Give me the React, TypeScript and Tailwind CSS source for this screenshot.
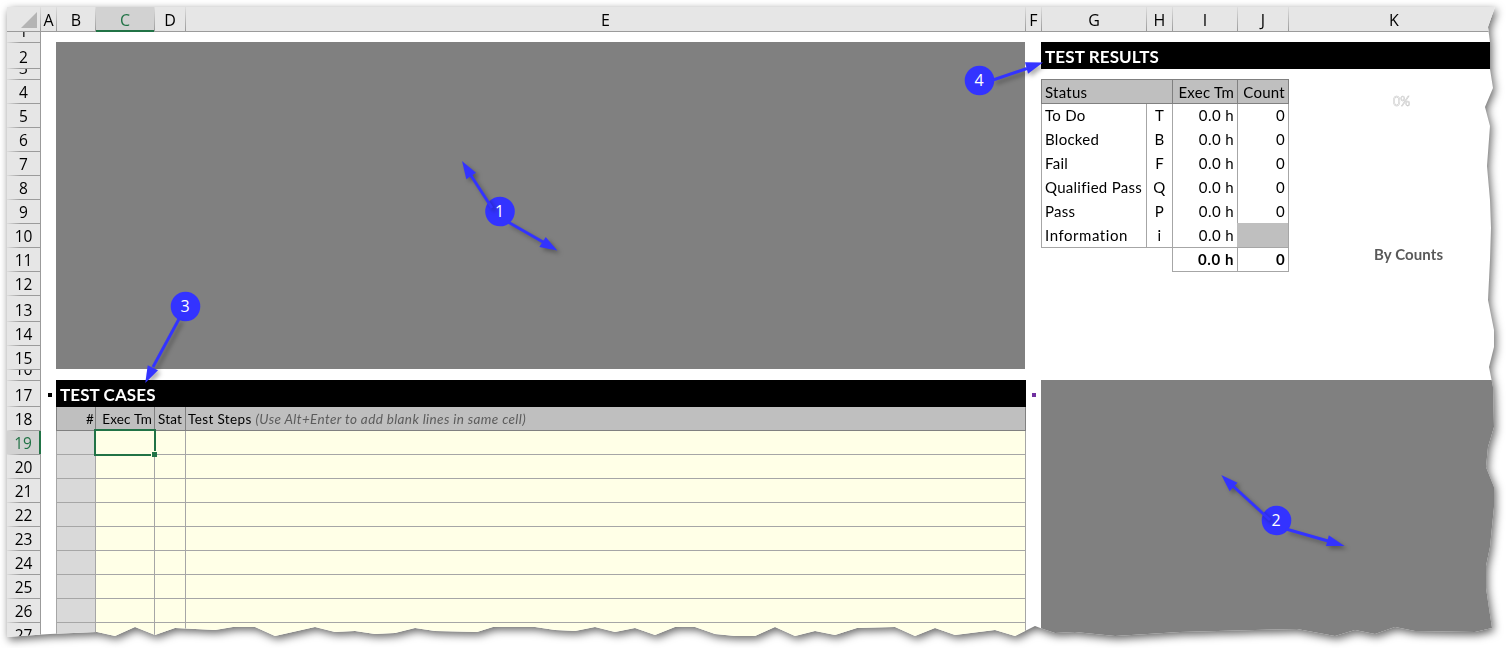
import React from "react";
import { clsx } from "clsx";

const columns: { name: string; width: string; selected?: boolean }[] = [
  { name: "A", width: "w-4" },
  { name: "B", width: "w-[39px]" },
  { name: "C", width: "w-[59px]", selected: true },
  { name: "D", width: "w-[31px]" },
  { name: "E", width: "w-[840px]" },
  { name: "F", width: "w-4" },
  { name: "G", width: "w-[105px]" },
  { name: "H", width: "w-[26px]" },
  { name: "I", width: "w-[65px]" },
  { name: "J", width: "w-[51px]" },
  { name: "K", width: "w-[211px]" },
];

const rowHeights: Record<number, string> = {
  1: "h-[11px]",
  2: "h-[26px]",
  3: "h-[11px]",
  13: "h-[26px]",
  16: "h-[11px]",
  17: "h-[26px]",
};

const statuses = [
  ["To Do", "T", "0"],
  ["Blocked", "B", "0"],
  ["Fail", "F", "0"],
  ["Qualified Pass", "Q", "0"],
  ["Pass", "P", "0"],
  ["Information", "i", ""],
];

function ColumnHeaders() {
  return (
    <div className="flex h-[25px] border-b border-[#9b9b9b] bg-[#e6e6e6]">
      <div className="flex w-[34px] shrink-0">
        <div className="flex flex-1 items-end justify-end pr-[3px] pb-[3px]">
          <svg width="16" height="16" viewBox="0 0 16 16">
            <path d="M16 0V16H0Z" fill="#b4b4b4" />
          </svg>
        </div>
        <div className="w-px bg-linear-to-b from-[#dedede] to-[#9b9b9b]" />
      </div>
      {columns.map((c) => (
        <div key={c.name} className={clsx("flex shrink-0", c.width)}>
          <div
            className={clsx(
              "flex flex-1 items-center justify-center pt-0.5 text-base leading-6",
              c.selected ? "h-[25px] border-b-2 border-[#217346] bg-[#d2d2d2] text-[#217346]" : "h-6 text-black",
            )}
          >
            {c.name}
          </div>
          <div className="h-6 w-px bg-linear-to-b from-[#dedede] to-[#9b9b9b]" />
        </div>
      ))}
    </div>
  );
}

function RowHeaders() {
  return (
    <div className="w-[34px] shrink-0">
      {Array.from({ length: 27 }, (_, i) => i + 1).map((n) => (
        <div
          key={n}
          className={clsx(
            "flex flex-col overflow-hidden",
            rowHeights[n] ?? "h-6",
            n === 19 ? "bg-[#d2d2d2] text-[#217346]" : "bg-[#e6e6e6] text-black",
          )}
        >
          <div
            className={clsx(
              "flex min-h-0 flex-1 items-end justify-center border-r text-[15.5px] leading-[22px]",
              n === 19 ? "border-r-2 border-[#217346]" : "border-[#9b9b9b]",
            )}
          >
            <span>{n}</span>
          </div>
          <div className="h-px shrink-0 bg-linear-to-r from-[#dedede] to-[#9b9b9b] to-40%" />
        </div>
      ))}
    </div>
  );
}

function TestCases() {
  const line = "border-r border-b border-[#a6a6a6]";
  const head = "border-r border-b border-[#808080] bg-[#bfbfbf]";
  return (
    <div className="w-[970px] shrink-0 pt-2.5">
      <div className="h-[327px] w-[969px] bg-[#808080]" />
      <div className="mt-[11px] flex h-[27px] items-center bg-black pt-0.5 pl-1 text-[17px] font-bold tracking-[0.1px] text-white">
        TEST CASES
      </div>
      <div className="flex h-6 text-[13.5px] leading-[25px] tracking-[0.2px] whitespace-nowrap">
        <div className={clsx("w-10 border-l pr-px text-right", head)}>#</div>
        <div className={clsx("w-[59px] pr-0.5 text-right", head)}>Exec Tm</div>
        <div className={clsx("w-[31px] text-center", head)}>Stat</div>
        <div className={clsx("w-[840px] pl-0.5 tracking-[0.37px]", head)}>
          Test Steps <i className="text-[#5c5c5c]">(Use Alt+Enter to add blank lines in same cell)</i>
        </div>
      </div>
      {Array.from({ length: 9 }, (_, i) => (
        <div key={i} className="flex h-6">
          <div className={clsx("w-10 border-l bg-[#d9d9d9]", line)} />
          <div className={clsx("w-[59px] bg-[#ffffe7]", line, i === 0 && "relative z-10")}>
            {i === 0 && (
              <div className="absolute -top-[2px] -left-[2px] h-[27px] w-[62px] border-2 border-[#217346]">
                <div className="absolute -right-[3px] -bottom-[3px] size-1.5 border-t border-l border-[#ffffe7] bg-[#217346]" />
              </div>
            )}
          </div>
          <div className={clsx("w-[31px] bg-[#ffffe7]", line)} />
          <div className={clsx("w-[840px] bg-[#ffffe7]", line)} />
        </div>
      ))}
    </div>
  );
}

function TestResults() {
  return (
    <div className="flex-1 pt-2.5">
      <div className="flex h-[27px] items-center bg-black pt-0.5 pl-1 text-[17px] font-bold tracking-[0.12px] text-white">
        TEST RESULTS
      </div>
      <div className="flex h-[311px] pt-2.5">
        <div className="w-[248px] shrink-0 text-[15px] leading-[22px] tracking-[0.25px] whitespace-nowrap">
          <div className="flex h-[25px] border border-[#808080] bg-[#bfbfbf] leading-[25px]">
            <div className="w-[131px] border-r border-[#808080] pl-[3px]">Status</div>
            <div className="w-[65px] border-r border-[#808080] pr-[3px] text-right">Exec Tm</div>
            <div className="w-[50px] pr-[3px] text-right">Count</div>
          </div>
          <div className="flex h-36">
            <div className="w-[106px] border-x border-b border-[#a6a6a6] pl-[3px]">
              {statuses.map(([name]) => (
                <div key={name} className={clsx("h-6", name === "Information" ? "tracking-[0.55px]" : "tracking-[0.28px]")}>
                  {name}
                </div>
              ))}
            </div>
            <div className="w-[26px] border-r border-b border-[#a6a6a6] text-center">
              {statuses.map(([name, key]) => (
                <div key={name} className="h-6">{key}</div>
              ))}
            </div>
            <div className="w-[65px] border-r border-b border-[#a6a6a6] pr-[3px] text-right tracking-[0.4px]">
              {statuses.map(([name]) => (
                <div key={name} className="h-6">0.0 h</div>
              ))}
            </div>
            <div className="w-[51px] border-r border-b border-[#a6a6a6] text-right">
              {statuses.map(([name, , count]) => (
                <div key={name} className={clsx("h-6 pr-[3px]", !count && "-mt-px -ml-px bg-[#bfbfbf]")}>
                  {count}
                </div>
              ))}
            </div>
          </div>
          <div className="ml-[131px] flex h-6 border-b border-l border-[#a6a6a6] text-right font-bold">
            <div className="w-[65px] border-r border-[#a6a6a6] pr-[3px] tracking-[0.6px]">0.0 h</div>
            <div className="w-[51px] border-r border-[#a6a6a6] pr-[3px]">0</div>
          </div>
        </div>
        <div className="flex w-[206px] flex-col pt-[13px]">
          <div className="pl-[104px] text-[12.5px] leading-5 text-transparent [-webkit-text-stroke:0.5px_#c4c4c4]">0%</div>
          <div className="mt-[132px] pl-[85px] text-[15px] leading-5 font-bold tracking-[0.1px] text-[#595959]">By Counts</div>
        </div>
      </div>
      <div className="h-[268px] bg-[#808080]" />
    </div>
  );
}

const markers = [
  {
    n: 1, x: 500, y: 211.5,
    arrows: [
      { from: [492, 208], to: [470, 174], head: "462,161 476,172.7 466.3,179.3" },
      { from: [508, 222], to: [543, 242], head: "557.3,250.5 545.7,237 539.3,247" },
    ],
  },
  {
    n: 2, x: 1276.5, y: 520.5,
    arrows: [
      { from: [1270, 520], to: [1233, 486], head: "1221.3,475 1237.5,482.7 1229.7,491.3" },
      { from: [1286, 529], to: [1328, 541], head: "1344.5,545.9 1328.8,535.2 1326,546" },
    ],
  },
  {
    n: 3, x: 185.5, y: 306.5,
    arrows: [{ from: [179, 319], to: [153, 367], head: "145.3,383 147.7,365.2 158,370.2" }],
  },
  {
    n: 4, x: 979.5, y: 80.5,
    arrows: [{ from: [993, 80], to: [1027, 68.5], head: "1043,62.5 1025,62.2 1028,73.8" }],
  },
];

function Annotations() {
  return (
    <svg className="pointer-events-none absolute inset-0" width="1506" height="648" viewBox="0 0 1506 648">
      {markers.map((m) => (
        <g key={m.n} fill="#3333ff" stroke="#3333ff">
          <circle cx={m.x} cy={m.y} r="14.8" stroke="none" />
          <g className="drop-shadow-[3px_3px_2px_rgba(0,0,0,0.3)]">
            {m.arrows.map((a) => (
              <g key={a.head}>
                <line x1={a.from[0]} y1={a.from[1]} x2={a.to[0]} y2={a.to[1]} strokeWidth="3" />
                <polygon points={a.head} stroke="none" />
              </g>
            ))}
          </g>
          <text x={m.x - 0.5} y={m.y + 5.5} textAnchor="middle" fill="#fff" stroke="none" fontSize="16" className="font-['Open_Sans',sans-serif]">
            {m.n}
          </text>
        </g>
      ))}
    </svg>
  );
}

export default function App() {
  return (
    <div className="relative h-[648px] w-[1506px] overflow-hidden bg-white text-black">
      <div className="h-full w-full drop-shadow-[2px_3px_4px_rgba(0,0,0,0.6)]">
        <div className="h-full w-full overflow-hidden bg-white pt-[7px] pl-[7px] font-['Open_Sans','Noto_Sans',sans-serif] [clip-path:polygon(7px_7px,1495px_7px,1488px_27px,1490px_42px,1490px_69px,1493px_88px,1485px_107px,1490px_126px,1487px_166px,1490px_200px,1491px_228px,1490px_260px,1488px_300px,1494px_330px,1494px_347px,1489px_367px,1493px_387px,1494px_427px,1488px_447px,1486px_467px,1494px_487px,1494px_507px,1490px_547px,1486px_566px,1486px_588px,1492px_628px,1475px_632px,1415px_631px,1395px_627px,1375px_634px,1355px_630px,1335px_636px,1297px_629px,1180px_632px,1115px_636px,1075px_632px,1055px_633px,1043px_629px,1035px_626px,1015px_636px,995px_630px,955px_635px,935px_628px,915px_636px,895px_627px,857px_628px,835px_635px,815px_631px,795px_636px,775px_627px,755px_636px,735px_636px,715px_634px,695px_627px,675px_627px,655px_635px,635px_628px,615px_632px,595px_627px,575px_631px,555px_630px,535px_627px,493px_627px,477px_632px,435px_631px,415px_628px,395px_633px,375px_634px,355px_631px,335px_632px,315px_627px,275px_636px,255px_627px,233px_627px,215px_630px,175px_628px,155px_635px,135px_627px,115px_636px,97px_632px,50px_634px,7px_637px)]">
          <ColumnHeaders />
          <div className="flex">
            <RowHeaders />
            <div className="flex w-[1465px] shrink-0 font-['Lato',sans-serif]">
              <div className="w-[15px] shrink-0 pt-[361px] pl-[7px]">
                <div className="size-1 bg-black" />
              </div>
              <TestCases />
              <div className="w-[15px] shrink-0 pt-[361px] pl-1.5">
                <div className="size-1 bg-[#7030a0]" />
              </div>
              <TestResults />
            </div>
          </div>
        </div>
      </div>
      <Annotations />
    </div>
  );
}
